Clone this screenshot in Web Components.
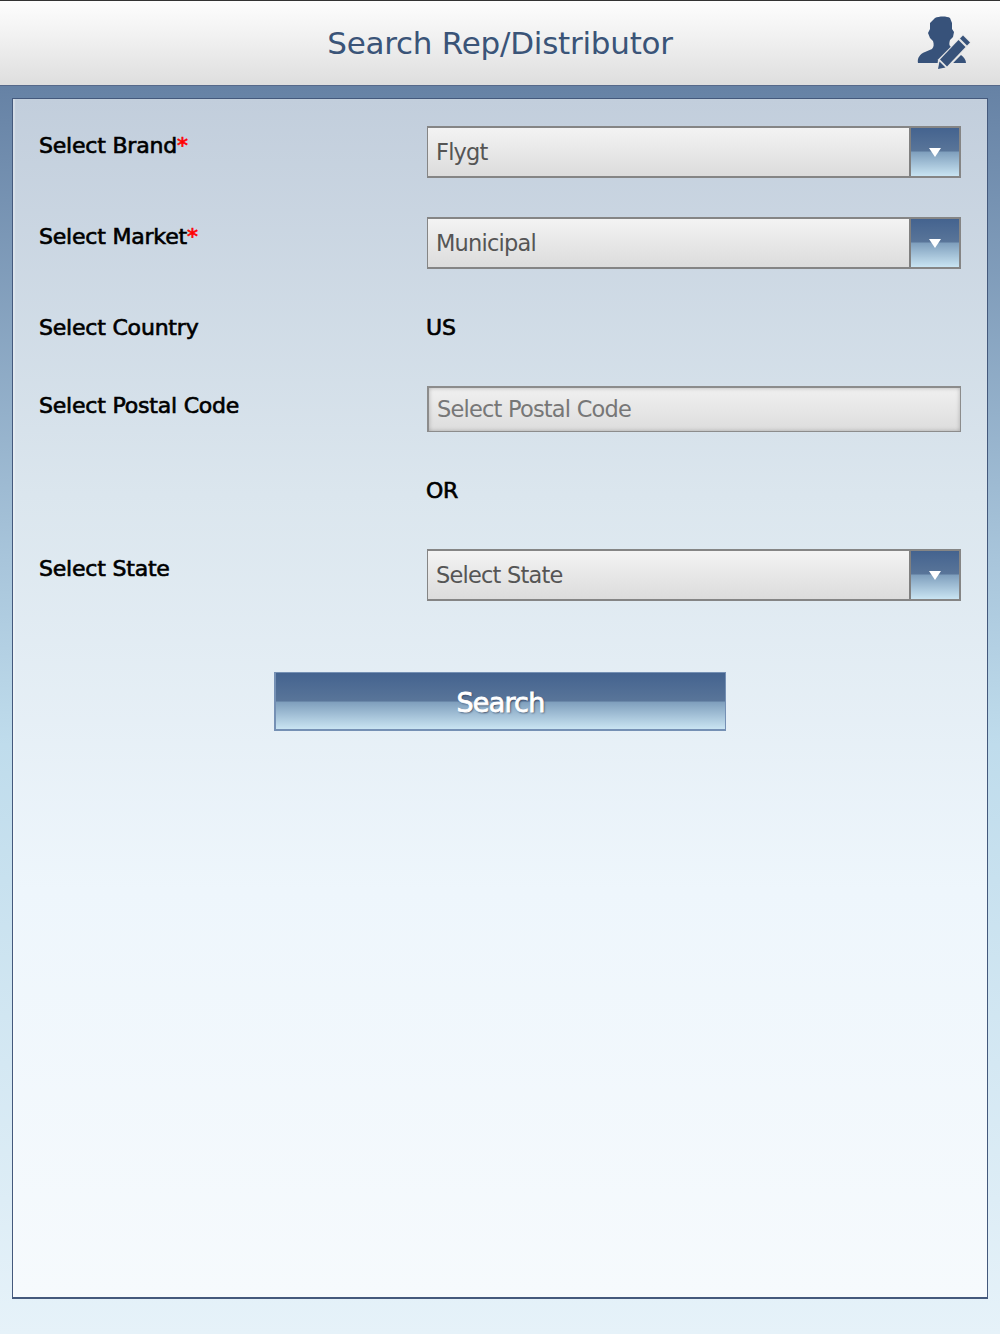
<!DOCTYPE html>
<html>
<head>
<meta charset="utf-8">
<title>Search Rep/Distributor</title>
<style>
	html, body { margin: 0; padding: 0; }
	body {
		width: 1000px;
		height: 1334px;
		overflow: hidden;
		font-family: "DejaVu Sans", sans-serif;
		background: linear-gradient(#6682a5 86px, #a8c5db 560px, #bfdcec 744px, #e6f2f9 1334px);
	}
</style>
</head>
<body>
<search-page>
	<app-header slot="header">Search Rep/Distributor</app-header>
	<form-row label="Select Brand" required><drop-down>Flygt</drop-down></form-row>
	<form-row label="Select Market" required><drop-down>Municipal</drop-down></form-row>
	<form-row label="Select Country"><span>US</span></form-row>
	<form-row label="Select Postal Code"><text-box placeholder="Select Postal Code"></text-box></form-row>
	<form-row><span>OR</span></form-row>
	<form-row label="Select State"><drop-down>Select State</drop-down></form-row>
	<search-button>Search</search-button>
</search-page>

<script>
const define = (name, html, init) => {
	const template = document.createElement('template');
	template.innerHTML = html;
	customElements.define(name, class extends HTMLElement {
		constructor() {
			super();
			this.attachShadow({ mode: 'open' }).appendChild(template.content.cloneNode(true));
		}
		connectedCallback() {
			if (init) init(this);
		}
	});
};

define('search-page', `
	<style>
		:host { display: block; }
		.panel {
			box-sizing: border-box;
			height: 1201px;
			margin: 12px 12px 0;
			padding: 27px 26px 0;
			border: 1px solid #44597c;
			border-bottom-width: 2px;
			background: linear-gradient(#c2cedc, #dbe6ee 33%, #eef6fc 66%, #f6fafd);
			box-shadow: inset 2px 0 1px rgba(255,255,255,.3);
			display: flex;
			flex-direction: column;
			gap: 39px;
		}
	</style>
	<slot name="header"></slot>
	<div class="panel"><slot></slot></div>
`);

define('app-header', `
	<style>
		:host {
			display: flex;
			box-sizing: border-box;
			height: 86px;
			align-items: center;
			justify-content: center;
			position: relative;
			border-top: 1px solid #333;
			border-bottom: 1px solid #56698a;
			background: linear-gradient(#fdfdfd, #f2f2f2 40%, #dedede);
			color: #3a5478;
			font-size: 31px;
			letter-spacing: -.25px;
		}
		svg { position: absolute; left: 917px; top: 13px; }
	</style>
	<slot></slot>
	<svg width="56" height="58" viewBox="0 0 56 58" fill="#37527a">
		<path d="M18 4C22 2 30 2 33 4L35 9V15L37 18L36 23L33 26C32 30 32 31 34 33L40 35L22 49H1C0 44 3 40 8 38L15 35C17 33 17 30 16 27L13 24L11 19L13 15V9z"/>
		<path d="M36 49H49C49 46 47 43 44 41z"/>
		<g transform="translate(0 -1.5)">
			<path d="M46 22L54 30L31 56L20 57L21 47z" fill="#e6e6e6"/>
			<path d="M46 23L53 30L50 33L43 26z"/>
			<path d="M41.500 27.500L48.500 34.500L30 54L23 47z"/>
			<path d="M22.500 49L28.500 55L21 56.500z"/>
		</g>
	</svg>
`);

define('form-row', `
	<style>
		:host {
			display: grid;
			grid-template-columns: 387px 535px;
			align-items: start;
			min-height: 39px;
			color: #000;
			font-size: 22px;
			line-height: 39px;
			letter-spacing: -.2px;
			-webkit-text-stroke: .65px #000;
		}
		.req { color: #f00; -webkit-text-stroke-color: #f00; }
	</style>
	<div><span class="text"></span><span class="req"></span></div>
	<div><slot></slot></div>
`, el => {
	el.shadowRoot.querySelector('.text').textContent = el.getAttribute('label') || '';
	if (el.hasAttribute('required')) el.shadowRoot.querySelector('.req').textContent = '*';
});

define('drop-down', `
	<style>
		:host {
			display: flex;
			box-sizing: border-box;
			height: 52px;
			margin-left: 1px;
			border: 2px solid #858585;
			border-left-width: 1px;
			background: linear-gradient(#f3f3f3, #dcdcdc);
			color: #555;
			font-size: 22.5px;
			letter-spacing: -.8px;
			line-height: 48px;
			-webkit-text-stroke: 0;
		}
		.value { flex: 1; padding-left: 8px; }
		.arrow {
			flex: 0 0 48px;
			display: flex;
			align-items: center;
			justify-content: center;
			border-left: 2px solid #808080;
			background: linear-gradient(#44638f, #597599 48%, #7f9fbd 50%, #c9e4f2);
		}
		svg { display: block; }
	</style>
	<div class="value"><slot></slot></div>
	<div class="arrow"><svg width="12" height="9" viewBox="0 0 12 9"><path d="M0 0h12L6 9z" fill="#fff"/></svg></div>
`);

define('text-box', `
	<style>
		:host {
			display: block;
			box-sizing: border-box;
			height: 46px;
			margin-left: 1px;
			border: 2px solid #8c8c8c;
			border-width: 2px 1px 1px 2px;
			background: linear-gradient(#f0f0f0, #dddddd);
			box-shadow: inset 0 0 4px rgba(0,0,0,.25);
			color: #777;
			font-size: 22.5px;
			letter-spacing: -.8px;
			line-height: 42px;
			padding-left: 8px;
			-webkit-text-stroke: 0;
		}
	</style>
	<span class="ph"></span>
`, el => {
	el.shadowRoot.querySelector('.ph').textContent = el.getAttribute('placeholder');
});

define('search-button', `
	<style>
		:host {
			display: block;
			box-sizing: border-box;
			width: 452px;
			height: 59px;
			margin: 32px 0 0 235px;
			border: 2px solid #7590b4;
			border-width: 1px 1px 2px 2px;
			background: linear-gradient(#44638f, #597599 50%, #7f9fbd 52%, #c9e4f2);
			color: #fff;
			font-size: 27px;
			letter-spacing: -.8px;
			-webkit-text-stroke: .8px #fff;
			line-height: 59px;
			text-align: center;
			text-shadow: 1px 1px 2px #33415a;
		}
	</style>
	<slot></slot>
`);
</script>
</body>
</html>
